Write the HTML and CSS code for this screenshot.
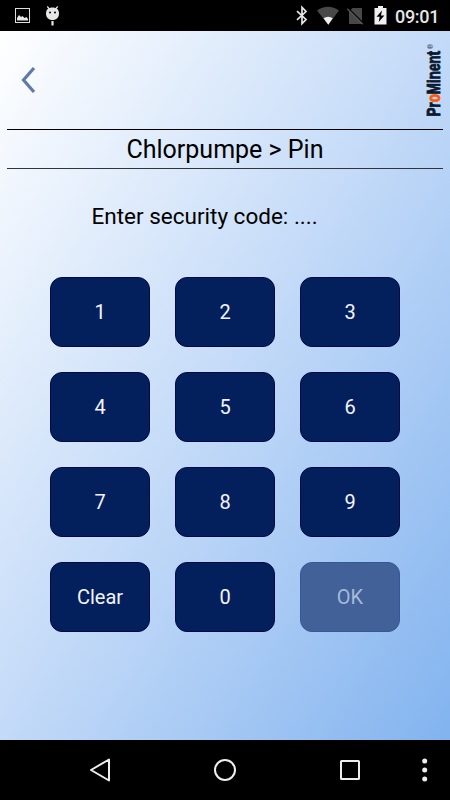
FILE: index.html
```html
<!DOCTYPE html>
<html lang="en">
<head>
<meta charset="utf-8">
<title>Pin</title>
<link rel="stylesheet" href="styles.css">
</head>
<body>
<div class="status">
  <svg class="status-left" width="80" height="31" viewBox="0 0 80 31">
    <rect x="15.500" y="8.500" width="14" height="14" fill="none" stroke="#dedede"/>
    <path d="M17 20.500V18l2-3 2 2 1.500-1 2 2 2-1 1.500 2v1.500z" fill="#e6e6e6"/>
    <path d="M46 13.500c0-4 2.500-6 6.500-6s6.500 2 6.500 6c0 4-2.500 6.500-6.500 6.500S46 17.500 46 13.500z" fill="#e6e6e6"/>
    <path d="M47.300 6.500l2.500 3M57.700 6.500l-2.500 3" stroke="#e6e6e6" stroke-width="1.200"/>
    <circle cx="50" cy="12.500" r="1" fill="#000"/><circle cx="55" cy="12.500" r="1" fill="#000"/>
    <path d="M52.500 21v4.500" stroke="#e6e6e6" stroke-width="2.200"/>
  </svg>
  <svg class="status-right" width="100" height="31" viewBox="290 0 100 31">
    <path d="M297 11.200l9 8.300-4 4.200V7.300l4 4.200-9 8.300" fill="none" stroke="#e6e6e6" stroke-width="1.700"/>
    <path d="M317 10.500Q328 3 339 10.500L328.300 24.700z" fill="#484848"/>
    <path d="M323.500 18.200q4.700-3 9.300 0L328.300 24.700z" fill="#f0f0f0"/>
    <path d="M352.500 8H362v16h-13V11.500z" fill="#484848"/>
    <path d="M348.500 8.500L364 24" stroke="#000" stroke-width="1.500"/>
    <path d="M347.300 8.700L362.700 24.300" stroke="#555" stroke-width="1.300"/>
    <path d="M374.500 8H378V6h5v2h3.500v16.500h-12z" fill="#f0f0f0"/>
    <path d="M382 10.500l-5.500 6.300h3.200l-1 5.200 5.700-6.500H381z" fill="#000"/>
  </svg>
  <span class="clock">09:01</span>
</div>
<main class="app">
  <header class="top">
    <svg class="back" width="16" height="28" viewBox="0 0 16 28"><path d="M13 2L2.500 14 13 26" fill="none" stroke="#6078aa" stroke-width="3.200"/></svg>
    <svg class="logo" width="20" height="80" viewBox="0 0 20 80">
      <g transform="translate(17 77.500) rotate(-90)">
        <text class="brand" x="0" y="0" textLength="65.500" lengthAdjust="spacingAndGlyphs">Pr<tspan class="accent">o</tspan>Minent</text>
        <text class="reg" x="67.500" y="-7.500">®</text>
      </g>
    </svg>
  </header>
  <h1 class="title"><span>Chlorpumpe &gt; Pin</span></h1>
  <p class="prompt">Enter security code: ....</p>
  <div class="keypad">
    <button>1</button><button>2</button><button>3</button>
    <button>4</button><button>5</button><button>6</button>
    <button>7</button><button>8</button><button>9</button>
    <button>Clear</button><button>0</button><button class="off">OK</button>
  </div>
</main>
<nav class="nav">
  <svg width="450" height="60" viewBox="0 0 450 60" fill="none" stroke="#eee" stroke-width="2">
    <path d="M91 30L109 19.500V40.500z" stroke-linejoin="round"/>
    <circle cx="225" cy="30" r="10"/>
    <rect x="341" y="21" width="18" height="18" rx=".5"/>
    <g fill="#eee" stroke="none"><circle cx="424.700" cy="21" r="2.500"/><circle cx="424.700" cy="30" r="2.500"/><circle cx="424.700" cy="39" r="2.500"/></g>
  </svg>
</nav>
</body>
</html>
```

FILE: styles.css
```css
* { box-sizing: border-box; }
body {
  margin: 0;
  width: 450px;
  height: 800px;
  display: flex;
  flex-direction: column;
  overflow: hidden;
  font-family: Roboto, sans-serif;
  color: #000;
}
.status {
  height: 31px;
  display: flex;
  background: #000;
}
.status-right { margin-left: 210px; }
.clock {
  margin-left: 5px;
  font-size: 18px;
  font-weight: 500;
  line-height: 33px;
  letter-spacing: -.3px;
  color: #e6e6e6;
}
.app {
  height: 709px;
  background: linear-gradient(to bottom right, #fff, #c3daf8 50%, #82b3ef);
}
.top {
  height: 98px;
  display: flex;
  justify-content: space-between;
  padding: 8px 7px 0 21px;
}
.back { margin-top: 27px; }
.brand {
  font: 700 17.5px "Liberation Sans", sans-serif;
  fill: #0b1830;
  stroke: #0b1830;
  stroke-width: .9px;
}
.brand .accent {
  fill: #ff5a0a;
  stroke: #ff5a0a;
}
.reg {
  font: 7px "Liberation Sans", sans-serif;
  fill: #0b1830;
}
.title {
  height: 40px;
  margin: 0 7px;
  border-top: 1px solid #000;
  border-bottom: 1px solid #303638;
  font-size: 25px;
  font-weight: 400;
  line-height: 39px;
  text-align: center;
}
.prompt {
  margin: 34px 0 0 91.500px;
  font-size: 22.5px;
  line-height: 26px;
}
.keypad {
  display: grid;
  grid-template-columns: repeat(3, 100px);
  grid-auto-rows: 70px;
  gap: 25.200px 25px;
  margin: 47.500px 0 0 50px;
}
.keypad button {
  padding: 0;
  border: 1px solid #020844;
  border-radius: 12px;
  background: #03205d;
  color: #f4f4f8;
  font: 20px Roboto, sans-serif;
}
.keypad .off {
  border-color: #355894;
  background: #426198;
  color: #a5b9d8;
}
.nav {
  height: 60px;
  background: #000;
}
.nav svg { display: block; }
```
